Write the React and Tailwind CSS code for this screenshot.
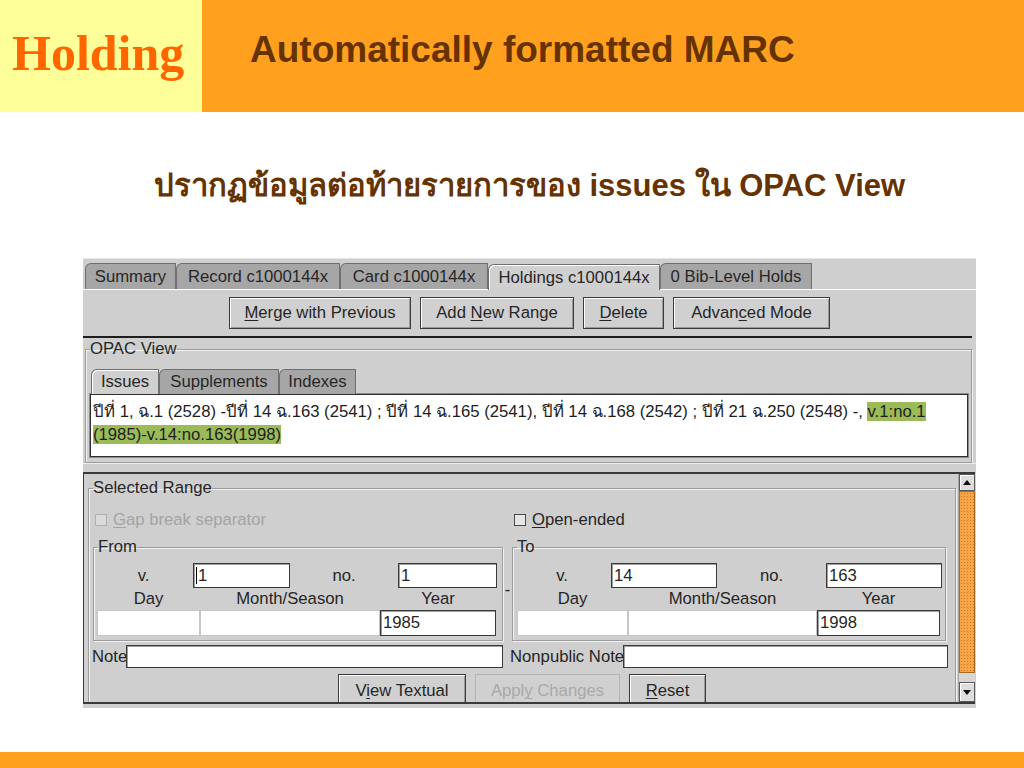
import React from "react";

const sans = "font-['Liberation_Sans',Arial,sans-serif]";

function Mn({ children }) {
  return <span className="underline decoration-1 underline-offset-[2px]">{children}</span>;
}

function Tab({ w, active, children, h = "h-[26px]" }) {
  return (
    <div
      className={`${w} ${h} shrink-0 flex items-center justify-center whitespace-nowrap border-l border-t border-r border-[#6f6f6f] rounded-tl-[6px] ${
        active
          ? "bg-[#d0d0d0] shadow-[inset_1px_1px_0_#ffffff] relative z-10 -mb-px"
          : "bg-[#a6a6a6]"
      }`}
    >
      <span>{children}</span>
    </div>
  );
}

function Btn({ w, disabled, children, h = "h-[32px]" }) {
  return (
    <div
      className={`${w} ${h} shrink-0 flex items-center justify-center whitespace-nowrap bg-[#d0d0d0] ${
        disabled
          ? "border border-[#b4b4b4] text-[#a9a9a9]"
          : "border border-[#3c3c3c] shadow-[inset_1px_1px_0_#ffffff,inset_-1px_-1px_0_#9a9a9a]"
      }`}
    >
      <span>{children}</span>
    </div>
  );
}

function Group({ title, className = "", children }) {
  return (
    <fieldset
      className={`border border-[#9c9c9c] shadow-[inset_1px_1px_0_#f2f2f2,1px_1px_0_#f2f2f2] ${className}`}
    >
      <legend className="ml-[4px] px-0 leading-[18px]">{title}</legend>
      {children}
    </fieldset>
  );
}

function Field({ w, value, h = "h-[25px]", light, caret }) {
  return (
    <div
      className={`${w} ${h} shrink-0 bg-white flex items-center pl-[2px] whitespace-nowrap overflow-hidden ${
        light
          ? "border border-[#c6c6c6]"
          : "border border-[#3a3a3a] shadow-[inset_1px_1px_0_#a0a0a0]"
      }`}
    >
      {caret && <span className="w-px h-[17px] bg-black mr-px" />}
      <span>{value}</span>
    </div>
  );
}

function Check({ disabled, children }) {
  return (
    <div className={`flex items-center gap-[6px] ${disabled ? "text-[#a4a4a4]" : ""}`}>
      <span
        className={`w-[12px] h-[12px] border ${
          disabled ? "border-[#b0b0b0] bg-[#dadada]" : "border-[#4a4a4a] bg-[#e6e6e6]"
        }`}
      />
      <span>{children}</span>
    </div>
  );
}

function RangeGroup({ title, w, c, inputs, rowW, year, pl }) {
  return (
    <Group title={title} className={`${w} h-[103px] shrink-0`}>
      <div className="flex items-center mt-[7px] h-[25px]">
        <div className={`${c[0]} text-center`}>v.</div>
        <Field w={c[1]} value={inputs[0]} caret={inputs[2]} />
        <div className={`${c[2]} text-center`}>no.</div>
        <Field w={c[3]} value={inputs[1]} />
      </div>
      <div className={`flex ${pl} h-[22px] items-center`}>
        <div className={`${rowW[0]} text-center`}>Day</div>
        <div className={`${rowW[1]} text-center`}>Month/Season</div>
        <div className={`${rowW[2]} text-center`}>Year</div>
      </div>
      <div className={`flex ${pl}`}>
        <Field w={rowW[0]} h="h-[26px]" light value="" />
        <Field w={rowW[1]} h="h-[26px]" light value="" />
        <Field w={rowW[2]} h="h-[26px]" value={year} />
      </div>
    </Group>
  );
}

function Scrollbar() {
  return (
    <div className="w-[17px] shrink-0 flex flex-col bg-[#d6d6d6] border-l border-[#a8a8a8]">
      <div className="h-[17px] border border-[#5a5a5a] bg-[#dedede] shadow-[inset_1px_1px_0_#ffffff] flex items-center justify-center">
        <svg width="8" height="5" viewBox="0 0 8 5">
          <path d="M0 5L4 0L8 5Z" fill="#111" />
        </svg>
      </div>
      <div className="h-[182px] border border-[#a86a20] bg-[#f7a547] bg-[radial-gradient(#c97a26_0.8px,transparent_0.9px)] bg-[length:3px_3px]" />
      <div className="flex-1" />
      <div className="h-[20px] border border-[#5a5a5a] bg-[#dedede] shadow-[inset_1px_1px_0_#ffffff] flex items-center justify-center">
        <svg width="8" height="5" viewBox="0 0 8 5">
          <path d="M0 0L8 0L4 5Z" fill="#111" />
        </svg>
      </div>
    </div>
  );
}

export default function App() {
  return (
    <div className={`w-[1024px] h-[768px] bg-white flex flex-col overflow-hidden ${sans}`}>
      {/* Header */}
      <div className="h-[112px] flex shrink-0">
        <div className="w-[202px] bg-[#ffff99] pl-[12px] pt-[28px]">
          <div className="font-['Liberation_Serif',serif] font-bold text-[50px] leading-none text-[#ff6600]">
            Holding
          </div>
        </div>
        <div className="flex-1 bg-[#ffa11f] pl-[48px] pt-[31px]">
          <div className="font-bold text-[37px] leading-none text-[#663300] whitespace-nowrap">
            Automatically formatted MARC
          </div>
        </div>
      </div>

      <div className="ml-[83px] w-[893px] flex flex-col shrink-0">
        <h1 className="mt-[58px] h-[30px] text-center font-bold text-[31px] leading-none text-[#663300] whitespace-nowrap">
          ปรากฏข้อมูลต่อท้ายรายการของ issues ใน OPAC View
        </h1>

        {/* Screenshot panel */}
        <div className="mt-[58px] h-[450px] bg-[#cfcfcf] text-[16.7px] text-[#262626] flex flex-col overflow-hidden border-t border-[#e6e6e6]">
          {/* Tabs */}
          <div className="h-[31px] shrink-0 flex items-end pl-[2px] border-b border-white">
            <Tab w="w-[91px]">Summary</Tab>
            <Tab w="w-[164px]">Record c1000144x</Tab>
            <Tab w="w-[148px]">Card c1000144x</Tab>
            <Tab w="w-[172px]" active>
              Holdings c1000144x
            </Tab>
            <Tab w="w-[152px]">0 Bib-Level Holds</Tab>
          </div>

          {/* Buttons */}
          <div className="h-[46px] shrink-0 flex justify-center gap-[9px] pt-[7px]">
            <Btn w="w-[182px]">
              <Mn>M</Mn>erge with Previous
            </Btn>
            <Btn w="w-[154px]">
              Add <Mn>N</Mn>ew Range
            </Btn>
            <Btn w="w-[81px]">
              <Mn>D</Mn>elete
            </Btn>
            <Btn w="w-[157px]">
              Advan<Mn>c</Mn>ed Mode
            </Btn>
          </div>
          <div className="h-[2px] shrink-0 bg-[#1e1e1e] mr-[4px]" />

          {/* OPAC View */}
          <Group title="OPAC View" className="mt-[2px] ml-[2px] mr-[4px] h-[123px] shrink-0">
            <div className="flex pl-[5px] pt-[11px]">
              <Tab w="w-[68px]" h="h-[25px]" active>
                Issues
              </Tab>
              <Tab w="w-[120px]" h="h-[25px]">
                Supplements
              </Tab>
              <Tab w="w-[77px]" h="h-[25px]">
                Indexes
              </Tab>
            </div>
            <div className="ml-[4px] mr-[3px] h-[63px] bg-white border border-[#2f2f2f] shadow-[0_0_0_1px_#8c8c8c] px-[2px] pt-[5px] text-[16.7px] leading-[23px] text-[#1e1e1e]">
              <div className="whitespace-nowrap">
                ปีที่ 1, ฉ.1 (2528) -ปีที่ 14 ฉ.163 (2541) ; ปีที่ 14 ฉ.165 (2541), ปีที่ 14 ฉ.168 (2542) ; ปีที่ 21 ฉ.250 (2548) -,{" "}
                <span className="bg-[#9bbb59]">v.1:no.1</span>
              </div>
              <div className="whitespace-nowrap">
                <span className="bg-[#9bbb59]">(1985)-v.14:no.163(1998)</span>
              </div>
            </div>
          </Group>

          {/* divider */}
          <div className="h-[9px] shrink-0 border-t border-[#ececec]" />

          {/* Lower panel */}
          <div className="flex-1 min-h-0 flex border-t-2 border-b-2 border-l border-[#3a3a3a] mb-[4px] mr-[1px]">
            <div className="flex-1 min-w-0 overflow-hidden">
              <Group title="Selected Range" className="ml-[4px] mt-[5px] w-[868px] h-[260px]">
                <div className="flex items-center mt-[13px] h-[20px]">
                  <div className="ml-[6px] w-[419px]">
                    <Check disabled>
                      <Mn>G</Mn>ap break separator
                    </Check>
                  </div>
                  <Check>
                    <Mn>O</Mn>pen-ended
                  </Check>
                </div>

                <div className="flex items-center mt-[8px] ml-[4px]">
                  <RangeGroup
                    title="From"
                    w="w-[410px]"
                    c={["w-[99px]", "w-[97px]", "w-[108px]", "w-[99px]"]}
                    inputs={["1", "1", true]}
                    rowW={["w-[103px]", "w-[180px]", "w-[116px]"]}
                    year="1985"
                    pl="ml-[3px]"
                  />
                  <div className="w-[9px] text-center">-</div>
                  <RangeGroup
                    title="To"
                    w="w-[434px]"
                    c={["w-[98px]", "w-[106px]", "w-[109px]", "w-[116px]"]}
                    inputs={["14", "163", false]}
                    rowW={["w-[111px]", "w-[189px]", "w-[123px]"]}
                    year="1998"
                    pl="ml-[4px]"
                  />
                </div>

                <div className="flex items-center mt-[4px] ml-[3px] h-[23px]">
                  <div className="w-[34px]">Note</div>
                  <Field w="w-[377px]" h="h-[23px]" value="" />
                  <div className="ml-[7px] w-[113px] whitespace-nowrap">Nonpublic Note</div>
                  <Field w="w-[325px]" h="h-[23px]" value="" />
                </div>

                <div className="flex justify-center gap-[9px] mt-[6px]">
                  <Btn w="w-[128px]" h="h-[34px]">
                    V<Mn>i</Mn>ew Textual
                  </Btn>
                  <Btn w="w-[145px]" h="h-[34px]" disabled>
                    Appl<Mn>y</Mn> Changes
                  </Btn>
                  <Btn w="w-[77px]" h="h-[34px]">
                    <Mn>R</Mn>eset
                  </Btn>
                </div>
              </Group>
            </div>
            <Scrollbar />
          </div>
        </div>
      </div>

      <div className="flex-1" />
      <div className="h-[16px] shrink-0 bg-[#ffa11f]" />
    </div>
  );
}
